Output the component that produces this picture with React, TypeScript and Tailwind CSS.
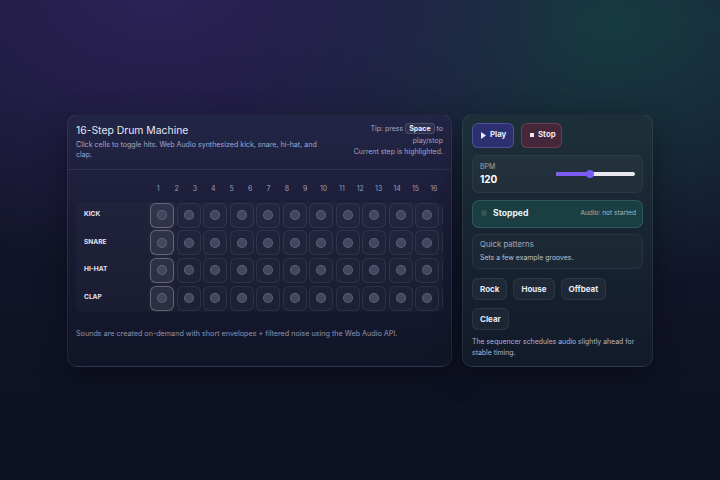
import { useState } from "react";

const STEPS = 16;
const TRACKS = ["KICK", "SNARE", "HI-HAT", "CLAP"];

function Cell({ current, on }: { current: boolean; on: boolean }) {
  return (
    <button
      className={
        "flex h-[25px] w-[24px] shrink-0 items-center justify-center rounded-[6px] border " +
        (current
          ? "border-white/25 bg-white/[0.08] shadow-[0_0_6px_rgba(255,255,255,0.06)]"
          : "border-white/[0.07] bg-white/[0.015]")
      }
    >
      <span
        className={
          "block h-[10px] w-[10px] rounded-full border " +
          (on
            ? "border-violet-300 bg-violet-400"
            : "border-white/15 bg-[#44465f]")
        }
      />
    </button>
  );
}

function SequencerCard({
  grid,
  step,
}: {
  grid: boolean[][];
  step: number;
}) {
  return (
    <section className="flex h-[253px] w-[385px] flex-col overflow-hidden rounded-[10px] border border-white/[0.07] bg-[linear-gradient(180deg,#232546_0%,#1a1c36_45%,#121527_100%)] shadow-[0_10px_30px_rgba(0,0,0,0.35)]">
      <header className="flex justify-between border-b border-white/[0.08] px-[8px] pt-[9px] pb-[9px]">
        <div className="w-[252px]">
          <h1 className="text-[10.4px] leading-[14px] text-[#e4e5f4]">
            16-Step Drum Machine
          </h1>
          <p className="mt-[2px] text-[7.1px] leading-[10px] text-[#a4a8c8]">
            Click cells to toggle hits. Web Audio synthesized kick, snare,
            hi-hat, and clap.
          </p>
        </div>
        <div className="-mt-[1px] flex flex-col items-end text-right text-[7px] leading-[12px] text-[#a3a7c4]">
          <p className="w-[74px]">
            Tip: press{" "}
            <kbd className="inline-block rounded-[4px] border border-white/15 bg-white/[0.06] px-[3px] align-middle font-[Inter] text-[7px] font-bold leading-[9px] text-[#eceef8]">
              Space
            </kbd>{" "}
            to play/stop
          </p>
          <p className="leading-[10px] whitespace-nowrap">
            Current step is highlighted.
          </p>
        </div>
      </header>

      <div className="px-[8px] pt-[14px]">
        <div className="flex text-[7px] leading-[10px] text-[#9a9eba]">
          <div className="w-[73px] shrink-0" />
          <div className="grid flex-1 grid-cols-16">
            {Array.from({ length: STEPS }, (_, i) => (
              <span key={i} className="text-center">
                {i + 1}
              </span>
            ))}
          </div>
        </div>

        <div className="mt-[8px] flex flex-col gap-[2.7px] overflow-hidden rounded-[6px] bg-white/[0.025] py-[1px]">
          {TRACKS.map((name, r) => (
            <div key={name} className="flex items-center">
              <span className="w-[74px] shrink-0 pl-[8px] text-[6.6px] font-bold text-[#e2e3f2]">
                {name}
              </span>
              <div className="flex gap-[2.5px]">
                {grid[r].map((on, c) => (
                  <Cell key={c} on={on} current={c === step} />
                ))}
              </div>
            </div>
          ))}
        </div>
      </div>

      <p className="px-[8px] pt-[17px] text-[7.2px] leading-[10px] text-[#9094b0]">
        Sounds are created on-demand with short envelopes + filtered noise
        using the Web Audio API.
      </p>
    </section>
  );
}

function ControlsCard() {
  const [bpm, setBpm] = useState(120);
  const pct = ((bpm - 60) / (200 - 60)) * 100;

  return (
    <aside className="flex h-[253px] w-[191px] flex-col rounded-[10px] border border-white/[0.07] bg-[linear-gradient(180deg,#1d3039_0%,#182532_45%,#121a29_100%)] px-[9px] pt-[8px] shadow-[0_10px_30px_rgba(0,0,0,0.35)]">
      <div className="flex gap-[7px]">
        <button className="flex h-[25px] w-[42px] items-center gap-[4px] rounded-[6px] border border-indigo-300/25 bg-[#2c3070] pl-[8px] text-[7.8px] font-bold text-[#e9eaff]">
          <svg width="5" height="7" viewBox="0 0 5 7">
            <path d="M0 0 L5 3.5 L0 7 Z" fill="currentColor" />
          </svg>
          Play
        </button>
        <button className="flex h-[25px] w-[41px] items-center gap-[4px] rounded-[6px] border border-rose-300/20 bg-[#45263a] pl-[8px] text-[7.8px] font-bold text-[#f0e6ec]">
          <span className="block h-[4px] w-[4px] bg-current" />
          Stop
        </button>
      </div>

      <div className="mt-[7px] flex h-[38px] items-center justify-between rounded-[7px] border border-white/[0.05] bg-white/[0.03] px-[7px]">
        <div>
          <p className="text-[7px] leading-[10px] text-[#9aa8b4]">BPM</p>
          <p className="mt-[1px] text-[10px] leading-[13px] font-bold text-white">
            {bpm}
          </p>
        </div>
        <div className="relative h-[8px] w-[79px]">
          <div className="absolute top-[2px] left-0 h-[4px] w-full rounded-full bg-[#e8e8ee]" />
          <div
            className="absolute top-[2px] left-0 h-[4px] rounded-full bg-[#7a5cf5]"
            style={{ width: `${pct}%` }}
          />
          <div
            className="absolute top-0 h-[8px] w-[8px] -translate-x-1/2 rounded-full bg-[#7a5cf5]"
            style={{ left: `${pct}%` }}
          />
          <input
            type="range"
            min={60}
            max={200}
            value={bpm}
            onChange={(e) => setBpm(Number(e.target.value))}
            className="absolute inset-0 opacity-0"
            aria-label="Tempo"
          />
        </div>
      </div>

      <div className="mt-[7px] flex h-[28px] items-center justify-between rounded-[7px] border border-teal-200/15 bg-[#1b3e43] pr-[6px] pl-[8px]">
        <div className="flex items-center gap-[6px]">
          <span className="block h-[6px] w-[6px] rounded-full bg-[#31574f]" />
          <span className="text-[8.6px] font-bold text-[#eef4f4]">
            Stopped
          </span>
        </div>
        <span className="text-[6.6px] text-[#a7b8bc]">Audio: not started</span>
      </div>

      <div className="mt-[6px] h-[35px] rounded-[7px] border border-white/[0.06] bg-white/[0.025] px-[7px] pt-[4px]">
        <p className="text-[7.8px] leading-[11px] text-[#a2aab8]">
          Quick patterns
        </p>
        <p className="mt-[3px] text-[6.9px] leading-[10px] text-[#bcc2d0]">
          Sets a few example grooves.
        </p>
      </div>

      <div className="mt-[9px] flex flex-wrap gap-x-[6px] gap-y-[8px]">
        {["Rock", "House", "Offbeat", "Clear"].map((p) => (
          <button
            key={p}
            className="h-[22px] rounded-[6px] border border-white/[0.07] bg-white/[0.04] px-[7px] text-[8px] font-bold text-[#e7e9f2]"
          >
            {p}
          </button>
        ))}
      </div>

      <p className="mt-[6px] text-[6.9px] leading-[11px] text-[#b2b3cc]">
        The sequencer schedules audio slightly ahead for stable timing.
      </p>
    </aside>
  );
}

export default function App() {
  const [grid] = useState(() =>
    TRACKS.map(() => Array.from({ length: STEPS }, () => false)),
  );

  return (
    <div className="flex h-[480px] w-[720px] items-center justify-center gap-[10px] overflow-hidden bg-[radial-gradient(ellipse_60%_55%_at_22%_0%,#2b2156_0%,transparent_100%),radial-gradient(ellipse_55%_55%_at_85%_5%,#173a42_0%,transparent_100%),linear-gradient(180deg,#181a33_0%,#0c1020_100%)] font-[Inter,'Noto_Sans',sans-serif] antialiased">
      <SequencerCard grid={grid} step={0} />
      <ControlsCard />
    </div>
  );
}
